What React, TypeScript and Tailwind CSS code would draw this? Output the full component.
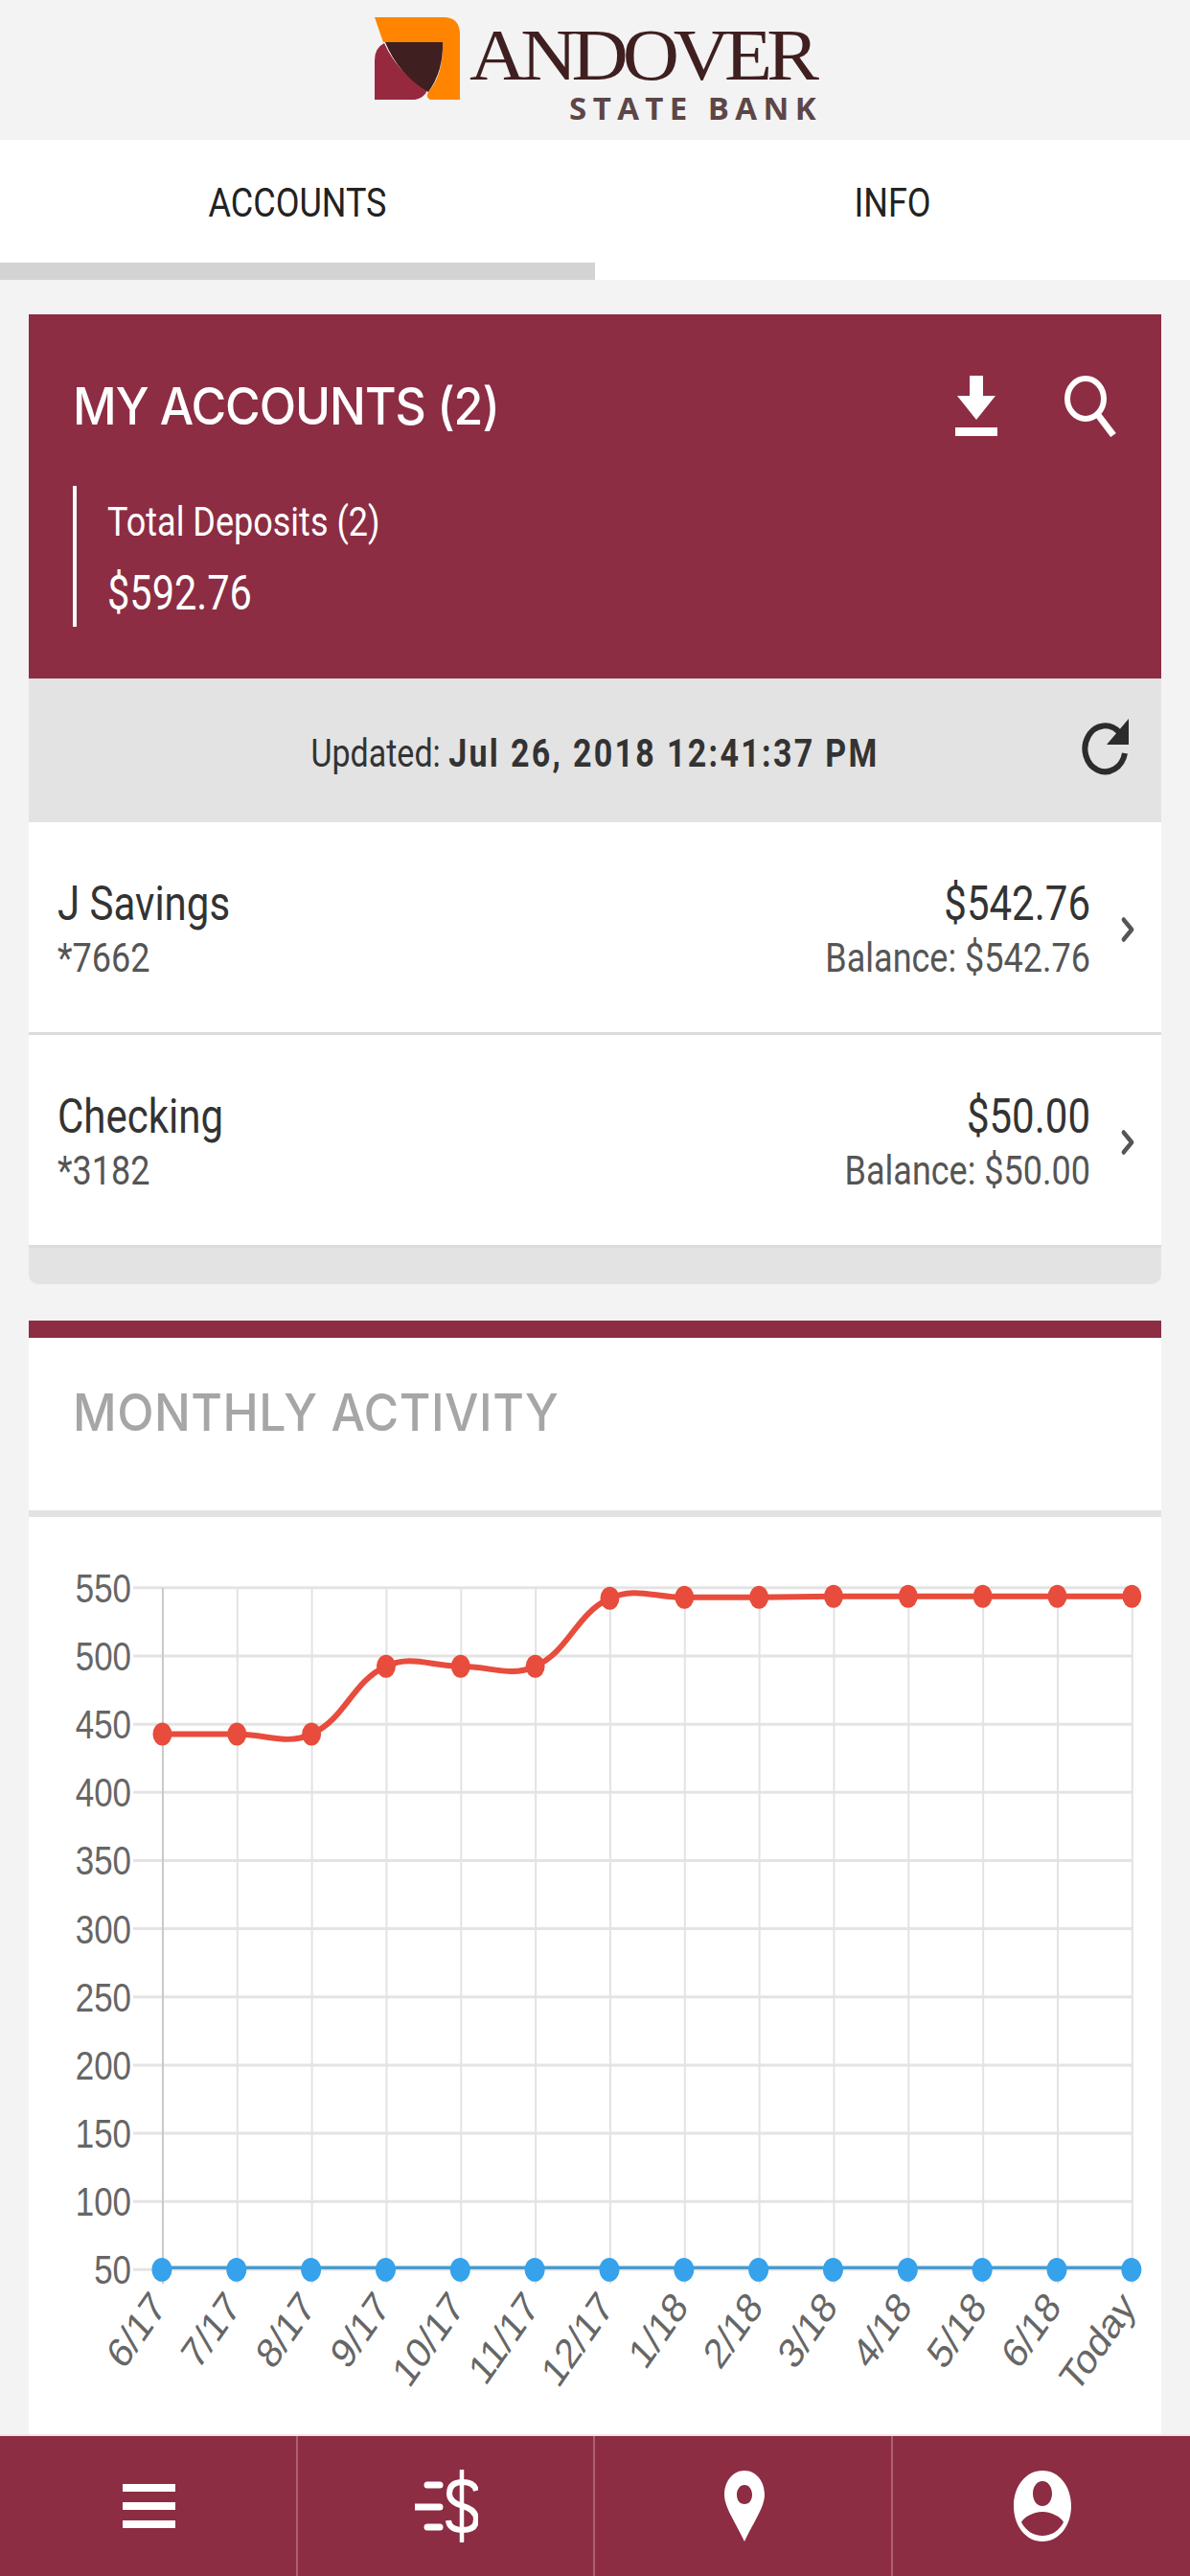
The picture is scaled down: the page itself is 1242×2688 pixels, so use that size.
import type { ReactNode } from 'react';
import { ChevronRight } from 'lucide-react';

const labels = ['6/17', '7/17', '8/17', '9/17', '10/17', '11/17', '12/17', '1/18', '2/18', '3/18', '4/18', '5/18', '6/18', 'Today'];
const ticks = [550, 500, 450, 400, 350, 300, 250, 200, 150, 100, 50];
const redY = [1808, 1808, 1808, 1737, 1737, 1737, 1666, 1665, 1665, 1664, 1664, 1664, 1664, 1664];

const CHART_TOP = 1581;
const colX = (i: number) => 169 + i * 78;
const tickY = (i: number) => 1655 + i * 71.3 - CHART_TOP;

// same spline chart.js draws with tension 0.4
function splinePath(points: { x: number; y: number }[]) {
  const t = 0.4;
  const controls = points.map((p, i) => {
    const prev = points[Math.max(i - 1, 0)];
    const next = points[Math.min(i + 1, points.length - 1)];
    const d01 = Math.hypot(p.x - prev.x, p.y - prev.y);
    const d12 = Math.hypot(next.x - p.x, next.y - p.y);
    const total = d01 + d12 || 1;
    const fa = (t * d01) / total;
    const fb = (t * d12) / total;
    return {
      px: p.x - fa * (next.x - prev.x),
      py: p.y - fa * (next.y - prev.y),
      nx: p.x + fb * (next.x - prev.x),
      ny: p.y + fb * (next.y - prev.y),
    };
  });
  let d = `M${points[0].x} ${points[0].y}`;
  for (let i = 1; i < points.length; i++) {
    d += ` C${controls[i - 1].nx} ${controls[i - 1].ny} ${controls[i].px} ${controls[i].py} ${points[i].x} ${points[i].y}`;
  }
  return d;
}

function Tall({ children, className = '' }: { children: ReactNode; className?: string }) {
  return <span className={`inline-block scale-y-[1.2] whitespace-nowrap ${className}`}>{children}</span>;
}

function Logo() {
  return (
    <div className="h-[146px] bg-[#f3f3f3] flex pl-[391px] pt-[18px] gap-[9px]">
      <svg width="90" height="87" viewBox="0 0 90 87" className="shrink-0">
        <path d="M0 0H72Q89 0 89 18V86H58Q53 84 56 78Q72 60 71 26H9Q4 12 0 0Z" fill="#ff8500" />
        <path d="M10 27Q0 32 0 45V86H42Q52 84 55 76Q24 58 10 27Z" fill="#97293f" />
        <path d="M11 26H71Q72 56 56 78Q25 60 11 26Z" fill="#3f1f20" />
      </svg>
      <div className="relative w-[362px] h-[110px] text-[#3f1f20]">
        <div className="absolute left-0 top-[8px] font-['Liberation_Serif',serif] text-[82px] leading-[64px] tracking-[-6px] scale-y-[0.94] whitespace-nowrap">ANDOVER</div>
        <div className="absolute right-0 top-[76px] font-['Open_Sans',sans-serif] font-bold text-[#5d4647] text-[33px] leading-[38px] tracking-[6.4px] mr-[-6px] whitespace-nowrap">STATE BANK</div>
      </div>
    </div>
  );
}

function Tabs() {
  return (
    <div className="h-[146px] bg-white grid grid-cols-2 font-['Roboto',sans-serif] text-[36px] text-[#222]">
      <div className="border-b-[18px] border-[#d3d3d3] flex items-center justify-center pt-[4px]">
        <Tall>ACCOUNTS</Tall>
      </div>
      <div className="flex items-center justify-center pb-[14px]">
        <Tall>INFO</Tall>
      </div>
    </div>
  );
}

function AccountsHeader() {
  return (
    <div className="h-[380px] bg-[#8c2d43] text-white pl-[46px] pr-[47px] pt-[60px]">
      <div className="flex items-center justify-between h-[72px]">
        <span className="font-['Inter',sans-serif] font-medium text-[50px] leading-[72px] tracking-[-1px] scale-y-[1.07] whitespace-nowrap">MY ACCOUNTS (2)</span>
        <div className="flex items-start gap-[70px]">
          <svg width="44" height="64" viewBox="0 0 44 64" fill="white">
            <path d="M15 0H29V21H42L22 46L2 21H15Z" />
            <rect x="0" y="54" width="44" height="9" />
          </svg>
          <svg width="54" height="64" viewBox="0 0 54 64" fill="none" stroke="white" strokeWidth="6">
            <ellipse cx="22" cy="24" rx="19" ry="21" />
            <path d="M35 41L51 62" strokeWidth="7" />
          </svg>
        </div>
      </div>
      <div className="mt-[47px] h-[147px] border-l-[4px] border-white pl-[32px] font-['Roboto',sans-serif] flex flex-col">
        <Tall className="text-[36px] leading-[48px] mt-[14px] self-start">Total Deposits (2)</Tall>
        <Tall className="text-[41.5px] leading-[48px] mt-[26px] self-start">$592.76</Tall>
      </div>
    </div>
  );
}

function UpdatedBar() {
  return (
    <div className="relative h-[150px] bg-[#e3e3e3] flex items-center justify-center font-['Roboto',sans-serif] text-[34px] text-[#333] pt-[6px]">
      <Tall>
        <span className="font-normal">Updated: </span>
        <span className="font-bold tracking-[2.3px]">Jul 26, 2018 12:41:37 PM</span>
      </Tall>
      <svg width="50" height="60" viewBox="0 0 50 60" className="absolute left-[1098px] top-[42px]" fill="none">
        <path d="M40 14A21 24 0 1 0 46 36" stroke="#2c2c2c" strokeWidth="6" />
        <path d="M50 0V27H27Z" fill="#2c2c2c" />
      </svg>
    </div>
  );
}

function AccountRow({ name, num, amount, balance }: { name: string; num: string; amount: string; balance: string }) {
  return (
    <div className="h-[222px] bg-white border-b-[3px] border-[#dcdcdc] flex items-center pl-[30px] pr-[16px] pt-[8px] font-['Roboto',sans-serif]">
      <div className="flex flex-col flex-1">
        <Tall className="text-[42px] leading-[56px] text-[#333] self-start">{name}</Tall>
        <Tall className="text-[36px] leading-[58px] text-[#555] self-start">{num}</Tall>
      </div>
      <div className="flex flex-col items-end">
        <Tall className="text-[42px] leading-[56px] text-[#333]">{amount}</Tall>
        <Tall className="text-[36px] leading-[58px] text-[#555]">{balance}</Tall>
      </div>
      <ChevronRight size={34} strokeWidth={3} className="ml-[24px] text-[#555] scale-y-[1.2] -translate-x-[2px] -translate-y-[2px]" />
    </div>
  );
}

function Chart() {
  const w = 1182;
  const h = 959;
  const left = 30;
  const red = redY.map((y, i) => ({ x: colX(i) - left - 0.5, y: y - CHART_TOP }));
  const blueY = 2366 - CHART_TOP;
  return (
    <svg width={w} height={h} viewBox={`0 0 ${w} ${h}`} className="block">
      {ticks.map((tick, i) => (
        <g key={tick}>
          <line x1={108} x2={colX(13) - left} y1={tickY(i)} y2={tickY(i)} stroke="#e4e4e4" strokeWidth="3" />
          <text
            transform={`translate(106 ${tickY(i) + 15}) scale(1 1.2)`}
            textAnchor="end"
            fontFamily="'Liberation Sans', sans-serif"
            fontSize="35"
            fill="#666"
          >
            {tick}
          </text>
        </g>
      ))}
      {labels.map((label, i) => (
        <g key={label + i}>
          <line
            x1={colX(i) - left}
            x2={colX(i) - left}
            y1={tickY(0)}
            y2={tickY(10) + 15}
            stroke={i === 0 ? '#c9c9c9' : '#e3e3e3'}
            strokeWidth="2"
          />
          <text
            transform={`translate(${colX(i) - left + 5} ${tickY(10) + 40}) scale(1 1.2) rotate(-50)`}
            textAnchor="end"
            fontFamily="'Liberation Sans', sans-serif"
            fontSize="37"
            fill="#666"
          >
            {label}
          </text>
        </g>
      ))}
      <path d={splinePath(red)} fill="none" stroke="#e74c3c" strokeWidth="6" />
      {red.map((p) => (
        <ellipse key={p.x} cx={p.x} cy={p.y} rx="10" ry="12" fill="#e74c3c" />
      ))}
      <line x1={colX(0) - left} x2={colX(13) - left} y1={blueY} y2={blueY} stroke="#4a9bce" strokeWidth="3.5" />
      {labels.map((label, i) => (
        <ellipse key={label + i} cx={colX(i) - left - 1} cy={blueY + 2} rx="10.5" ry="12.5" fill="#36a2eb" />
      ))}
    </svg>
  );
}

function BottomNav() {
  return (
    <div className="h-[148px] shrink-0 bg-[#8c2d43] border-t-[2px] border-[#f3e4e0] grid grid-cols-4 divide-x-2 divide-[#a9626f] text-white">
      <div className="flex items-center justify-center pl-[3px]">
        <svg width="56" height="46" viewBox="0 0 56 46" fill="white">
          <rect width="55" height="8" />
          <rect y="19" width="55" height="8" />
          <rect y="38" width="55" height="8" />
        </svg>
      </div>
      <div className="flex items-center justify-center pl-[3px]">
        <svg width="66" height="76" viewBox="0 0 66 76" fill="none" stroke="white">
          <path d="M13 16H26M1 39H26M13 60H26" strokeWidth="7" strokeLinecap="round" />
          <path d="M64 22Q62 13 50 13Q36 13 36 25Q36 34 50 38Q64 42 64 52Q64 63 50 63Q36 63 35 53" strokeWidth="6" />
          <path d="M49 1V75" strokeWidth="4.5" strokeLinecap="round" />
        </svg>
      </div>
      <div className="flex items-center justify-center pl-[3px]">
        <svg width="44" height="74" viewBox="0 0 44 74" fill="white">
          <path
            fillRule="evenodd"
            d="M22 0C10 0 1 11 1 25C1 38 12 53 22 74C32 53 43 38 43 25C43 11 34 0 22 0ZM22 15C27 15 30 20 30 25C30 31 27 35 22 35C17 35 14 31 14 25C14 20 17 15 22 15Z"
          />
        </svg>
      </div>
      <div className="flex items-center justify-center pl-[3px]">
        <svg width="62" height="74" viewBox="0 0 62 74" fill="white">
          <path
            fillRule="evenodd"
            d="M31 0C14 0 1 16 1 37C1 58 14 74 31 74C48 74 61 58 61 37C61 16 48 0 31 0ZM31 11C37 11 41 17 41 24C41 31 37 37 31 37C25 37 21 31 21 24C21 17 25 11 31 11ZM31 43C41 43 51 49 53 54C48 63 40 68 31 68C22 68 14 63 9 54C11 49 21 43 31 43Z"
          />
        </svg>
      </div>
    </div>
  );
}

export default function App() {
  return (
    <div className="w-[1242px] h-[2688px] overflow-hidden bg-[#f3f3f3] flex flex-col">
      <Logo />
      <Tabs />
      <div className="flex-1 min-h-0 flex flex-col px-[30px] pt-[36px]">
        <AccountsHeader />
        <UpdatedBar />
        <AccountRow name="J Savings" num="*7662" amount="$542.76" balance="Balance: $542.76" />
        <AccountRow name="Checking" num="*3182" amount="$50.00" balance="Balance: $50.00" />
        <div className="h-[38px] bg-[#e3e3e3] rounded-b-[10px]" />
        <div className="mt-[38px] flex-1 min-h-0 bg-white border-t-[18px] border-[#8c2d43] flex flex-col">
          <div className="h-[187px] shrink-0 px-[46px] pb-[24px] flex items-center border-b-[7px] border-[#e3e3e3]">
            <span className="font-['Inter',sans-serif] font-medium text-[50px] tracking-[0.5px] scale-y-[1.07] text-[#a6a6a6] whitespace-nowrap">MONTHLY ACTIVITY</span>
          </div>
          <Chart />
        </div>
      </div>
      <BottomNav />
    </div>
  );
}
